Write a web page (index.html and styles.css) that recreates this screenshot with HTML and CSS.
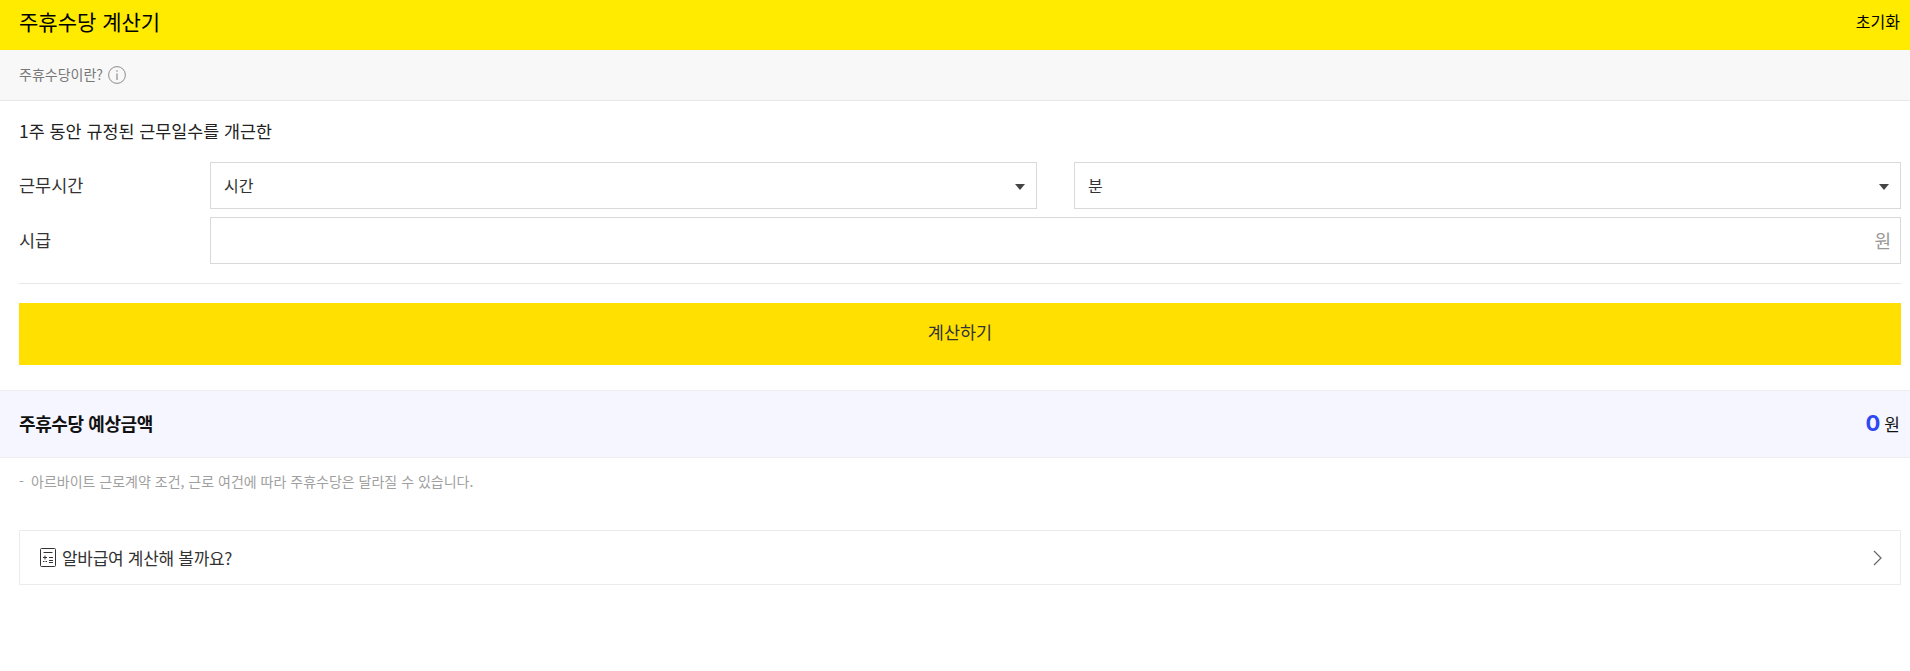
FILE: index.html
```html
<!DOCTYPE html>
<html lang="ko">
<head>
<meta charset="utf-8">
<title>주휴수당 계산기</title>
<link rel="stylesheet" href="styles.css">
</head>
<body>
<header class="top">
  <h1 class="top-title">주휴수당 계산기</h1>
  <span class="top-reset">초기화</span>
</header>
<div class="info">
  <span class="info-text">주휴수당이란?</span>
  <svg class="info-icon" width="18" height="18" viewBox="0 0 18 18" fill="none" stroke="#8c8c8c">
    <circle cx="9" cy="9" r="8.4"/>
    <path d="M9 7.5v6.5" stroke-width="1.2"/>
    <path d="M9 4.2v1.6" stroke-width="1.2"/>
  </svg>
</div>
<main class="form">
  <p class="form-title">1주 동안 규정된 근무일수를 개근한</p>
  <div class="row">
    <span class="label">근무시간</span>
    <div class="fields">
      <div class="box select"><span>시간</span><i class="caret"></i></div>
      <div class="box select"><span>분</span><i class="caret"></i></div>
    </div>
  </div>
  <div class="row row-second">
    <span class="label">시급</span>
    <div class="fields">
      <div class="box input"><span class="unit">원</span></div>
    </div>
  </div>
  <hr class="divider">
  <div class="calc"><span>계산하기</span></div>
</main>
<section class="result">
  <strong class="result-title">주휴수당 예상금액</strong>
  <span class="result-value"><b class="amount">0</b> 원</span>
</section>
<p class="note"><span class="dash">-</span>아르바이트 근로계약 조건, 근로 여건에 따라 주휴수당은 달라질 수 있습니다.</p>
<a class="link">
  <svg class="calc-icon" width="16" height="19" viewBox="0 0 16 19" fill="none" stroke="#333">
    <rect x="0.5" y="0.5" width="15" height="18" rx="1"/>
    <path d="M3.5 4.5h9"/>
    <path d="M3 9.5h4M5 7.5v4M9 9.5h4M3 13.5h1.5M5.5 13.5h1.5M9 12.5h4M9 14.5h4"/>
  </svg>
  <span class="link-text">알바급여 계산해 볼까요?</span>
  <svg class="chev" width="9" height="16" viewBox="0 0 9 16" fill="none" stroke="#666" stroke-width="1.2">
    <path d="M1 1l7 7-7 7"/>
  </svg>
</a>
</body>
</html>
```
FILE: styles.css
```css
* { box-sizing: border-box; }
html, body { margin: 0; padding: 0; }
body {
  font-family: "Noto Sans CJK KR", "Noto Sans", sans-serif;
  font-size: 16px;
  color: #222;
  background: #fff;
  padding-right: 9px;
}
.top {
  height: 50px;
  margin-right: -9px;
  padding: 0 10px 8px 19px;
  background: #ffeb00;
  display: flex;
  align-items: center;
  justify-content: space-between;
}
.top-title { margin: 0; font-size: 21px; font-weight: 400; color: #000; line-height: 30px; }
.top-reset { font-size: 16px; color: #000; }
.info {
  height: 51px;
  margin-right: -9px;
  padding-left: 19px;
  background: #f8f8f8;
  border-bottom: 1px solid #e8e8e8;
  display: flex;
  align-items: center;
  gap: 5px;
  font-size: 14px;
  color: #777;
}
.info-text { padding-bottom: 2px; }
.form { padding: 0 0 0 19px; }
.form-title { margin: 0; padding-top: 17px; height: 61px; font-size: 17.4px; line-height: 26px; color: #222; }
.row { display: flex; align-items: center; height: 47px; }
.row-second { margin-top: 8px; }
.label { width: 191px; flex: none; font-size: 17.5px; color: #333; padding-bottom: 2px; }
.fields { flex: 1; display: flex; gap: 37px; }
.box {
  flex: 1;
  height: 47px;
  border: 1px solid #d9d9d9;
  display: flex;
  align-items: center;
  padding: 0 11px 0 13px;
  font-size: 16px;
  color: #333;
}
.select { justify-content: space-between; }
.select span { padding-bottom: 2px; }
.caret {
  width: 0;
  height: 0;
  margin-top: 2px;
  border-left: 5px solid transparent;
  border-right: 5px solid transparent;
  border-top: 6px solid #444;
}
.input { justify-content: flex-end; padding-right: 9px; }
.unit { color: #999; font-size: 18px; padding-bottom: 2px; }
.divider { border: 0; border-top: 1px solid #e8e8e8; margin: 19px 0 19px; }
.calc {
  height: 62px;
  background: #ffe000;
  display: flex;
  align-items: center;
  justify-content: center;
  font-size: 17.5px;
  color: #333;
}
.calc span { padding-bottom: 5px; }
.result {
  margin: 25px -9px 0 0;
  height: 68px;
  padding: 0 10px 2px 19px;
  background: #f5f6ff;
  border-top: 1px solid #eee;
  border-bottom: 1px solid #eee;
  display: flex;
  align-items: center;
  justify-content: space-between;
}
.result-title { font-size: 18px; font-weight: 700; color: #111; letter-spacing: -0.4px; }
.result-value { font-size: 17px; color: #111; display: flex; align-items: center; gap: 4px; }
.amount { font-family: "Inter", sans-serif; font-size: 22px; font-weight: 700; color: #2e48f2; }
.note { margin: 11px 0 0 19px; font-size: 14px; line-height: 24px; color: #a0a0a0; display: flex; }
.dash { width: 12px; }
.link {
  margin: 37px 0 0 19px;
  height: 55px;
  border: 1px solid #ececec;
  display: flex;
  align-items: center;
  padding: 0 18px 0 20px;
  font-size: 17px;
  letter-spacing: -0.3px;
  color: #333;
}
.calc-icon { flex: none; margin-right: 6px; }
.link-text { flex: 1; padding-bottom: 1px; }
```
